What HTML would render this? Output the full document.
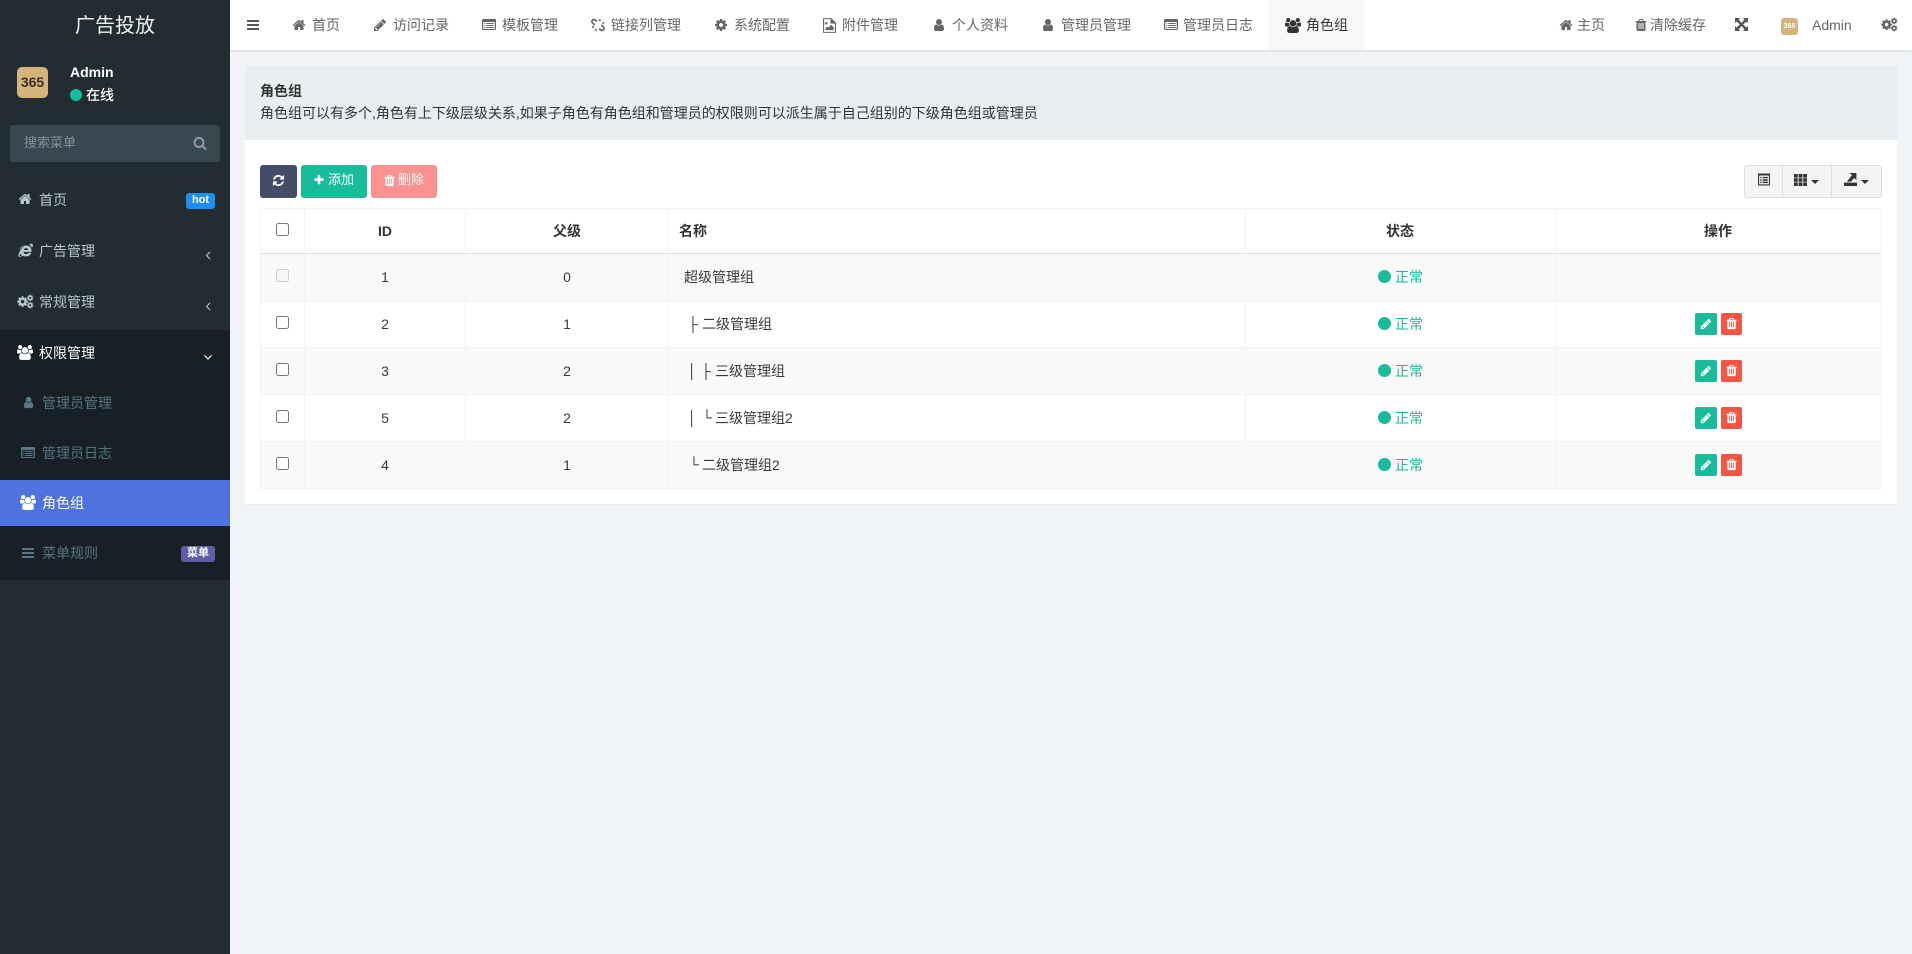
<!DOCTYPE html>
<html><head><meta charset="utf-8"><title>角色组</title>
<style>
html,body{margin:0;padding:0;width:1912px;height:954px;overflow:hidden;background:#f1f4f6;font-family:"Liberation Sans","Noto Sans CJK SC",sans-serif;font-size:14px;color:#3a3a3a}
.b{position:absolute}
.t{position:absolute;white-space:nowrap;line-height:20px;height:20px}
.c{transform:translateX(-50%)}
svg.i{position:absolute;fill:currentColor;overflow:visible}
.k{position:absolute;margin:0;width:13px;height:13px;left:276px}
.w{font-weight:bold}
</style></head><body>
<svg width="0" height="0" style="position:absolute">
<symbol id="home" viewBox="0 0 1792 1792"><path d="M1472 992v480q0 26-19 45t-45 19h-384v-384h-256v384h-384q-26 0-45-19t-19-45v-480q0-1 .5-3t.5-3l575-474 575 474q1 2 1 6zm223-69l-62 74q-8 9-21 11h-3q-13 0-21-7l-692-577-692 577q-12 8-24 7-13-2-21-11l-62-74q-8-10-7-23.5t11-21.5l719-599q32-26 76-26t76 26l244 204v-195q0-14 9-23t23-9h192q14 0 23 9t9 23v408l219 182q10 8 11 21.5t-7 23.5z"/></symbol>
<symbol id="bars" viewBox="0 0 1792 1792"><path d="M1664 1344v128q0 26-19 45t-45 19h-1408q-26 0-45-19t-19-45v-128q0-26 19-45t45-19h1408q26 0 45 19t19 45zm0-512v128q0 26-19 45t-45 19h-1408q-26 0-45-19t-19-45v-128q0-26 19-45t45-19h1408q26 0 45 19t19 45zm0-512v128q0 26-19 45t-45 19h-1408q-26 0-45-19t-19-45v-128q0-26 19-45t45-19h1408q26 0 45 19t19 45z"/></symbol>
<symbol id="pencil" viewBox="0 0 1792 1792"><path d="M491 1536l91-91-235-235-91 91v107h128v128h107zm523-928q0-22-22-22-10 0-17 7l-542 542q-7 7-7 17 0 22 22 22 10 0 17-7l542-542q7-7 7-17zm-54-192l416 416-832 832h-416v-416zm683 96q0 53-37 90l-166 166-416-416 166-165q36-38 90-38 53 0 91 38l235 234q37 39 37 91z"/></symbol>
<symbol id="user" viewBox="0 0 1792 1792"><path d="M1536 1399q0 109-62.5 187t-150.5 78h-854q-88 0-150.5-78t-62.5-187q0-85 8.5-160.5t31.5-152 58.5-131 94-89 134.5-34.5q131 128 313 128t313-128q76 0 134.5 34.5t94 89 58.5 131 31.5 152 8.5 160.5zm-256-887q0 159-112.5 271.5t-271.5 112.5-271.5-112.5-112.5-271.5 112.5-271.5 271.5-112.5 271.5 112.5 112.5 271.5z"/></symbol>
<symbol id="users" viewBox="0 0 1920 1792"><path d="M593 896q-162 5-265 128h-134q-82 0-138-40.5t-56-118.5q0-353 124-353 6 0 43.5 21t97.5 42.5 119 21.5q67 0 133-23-5 37-5 66 0 139 81 256zm1071 637q0 120-73 189.5t-194 69.5h-874q-121 0-194-69.5t-73-189.5q0-53 3.5-103.5t14-109 26.5-108.5 43-97.5 62-81 85.5-53.5 111.5-20q10 0 43 21.5t73 48 107 48 135 21.5 135-21.5 107-48 73-48 43-21.5q61 0 111.5 20t85.5 53.5 62 81 43 97.5 26.5 108.5 14 109 3.5 103.5zm-1024-1277q0 106-75 181t-181 75-181-75-75-181 75-181 181-75 181 75 75 181zm704 384q0 159-112.5 271.5t-271.5 112.5-271.5-112.5-112.5-271.5 112.5-271.5 271.5-112.5 271.5 112.5 112.5 271.5zm576 225q0 78-56 118.5t-138 40.5h-134q-103-123-265-128 81-117 81-256 0-29-5-66 66 23 133 23 59 0 119-21.5t97.5-42.5 43.5-21q124 0 124 353zm-128-609q0 106-75 181t-181 75-181-75-75-181 75-181 181-75 181 75 75 181z"/></symbol>
<symbol id="trash" viewBox="0 0 1792 1792"><path d="M704 1376v-704q0-14-9-23t-23-9h-64q-14 0-23 9t-9 23v704q0 14 9 23t23 9h64q14 0 23-9t9-23zm256 0v-704q0-14-9-23t-23-9h-64q-14 0-23 9t-9 23v704q0 14 9 23t23 9h64q14 0 23-9t9-23zm256 0v-704q0-14-9-23t-23-9h-64q-14 0-23 9t-9 23v704q0 14 9 23t23 9h64q14 0 23-9t9-23zm-544-992h448l-48-117q-7-9-17-11h-317q-10 2-17 11zm928 32v64q0 14-9 23t-23 9h-96v948q0 83-47 143.5t-113 60.5h-832q-66 0-113-58.5t-47-141.5v-952h-96q-14 0-23-9t-9-23v-64q0-14 9-23t23-9h309l70-167q15-37 54-63t79-26h320q40 0 79 26t54 63l70 167h309q14 0 23 9t9 23z"/></symbol>
<symbol id="search" viewBox="0 0 1792 1792"><path d="M1216 832q0-185-131.5-316.5t-316.5-131.5-316.5 131.5-131.5 316.5 131.5 316.5 316.5 131.5 316.5-131.5 131.5-316.5zm512 832q0 52-38 90t-90 38q-54 0-90-38l-343-342q-179 124-399 124-143 0-273.5-55.5t-225-150-150-225-55.5-273.5 55.5-273.5 150-225 225-150 273.5-55.5 273.5 55.5 225 150 150 225 55.5 273.5q0 220-124 399l343 343q37 37 37 90z"/></symbol>
<symbol id="plus" viewBox="0 0 1792 1792"><path d="M1600 736v192q0 40-28 68t-68 28h-416v416q0 40-28 68t-68 28h-192q-40 0-68-28t-28-68v-416h-416q-40 0-68-28t-28-68v-192q0-40 28-68t68-28h416v-416q0-40 28-68t68-28h192q40 0 68 28t28 68v416h416q40 0 68 28t28 68z"/></symbol>
<symbol id="refresh" viewBox="0 0 1792 1792"><path d="M1639 1056q0 5-1 7-64 268-268 434.5t-478 166.5q-146 0-282.5-55t-243.5-157l-129 129q-19 19-45 19t-45-19-19-45v-448q0-26 19-45t45-19h448q26 0 45 19t19 45-19 45l-137 137q71 66 161 102t187 36q134 0 250-65t186-179q11-17 53-117 8-23 30-23h192q13 0 22.5 9.5t9.5 22.5zm25-800v448q0 26-19 45t-45 19h-448q-26 0-45-19t-19-45 19-45l138-138q-148-137-349-137-134 0-250 65t-186 179q-11 17-53 117-8 23-30 23h-199q-13 0-22.5-9.5t-9.5-22.5v-7q65-268 270-434.5t480-166.5q146 0 284 55.5t245 156.5l130-129q19-19 45-19t45 19 19 45z"/></symbol>
<symbol id="cog" viewBox="0 0 1792 1792"><path d="M1152 896q0-106-75-181t-181-75-181 75-75 181 75 181 181 75 181-75 75-181zm512-109v222q0 12-8 23t-20 13l-185 28q-19 54-39 91 35 50 107 138 10 12 10 25t-9 23q-27 37-99 108t-94 71q-12 0-26-9l-138-108q-44 23-91 38-16 136-29 186-7 28-36 28h-222q-14 0-24.5-8.5t-11.5-21.5l-28-184q-49-16-90-37l-141 107q-10 9-25 9-14 0-25-11-126-114-165-168-7-10-7-23 0-12 8-23 15-21 51-66.5t54-70.5q-27-50-41-99l-183-27q-13-2-21-12.5t-8-23.5v-222q0-12 8-23t19-13l186-28q14-46 39-92-40-57-107-138-10-12-10-24 0-10 9-23 26-36 98.5-107.5t94.5-71.5q13 0 26 10l138 107q44-23 91-38 16-136 29-186 7-28 36-28h222q14 0 24.5 8.5t11.5 21.5l28 184q49 16 90 37l142-107q9-9 24-9 13 0 25 10 129 119 165 170 7 8 7 22 0 12-8 23-15 21-51 66.5t-54 70.5q26 50 41 98l183 28q13 2 21 12.5t8 23.5z"/></symbol>
<symbol id="cogs" viewBox="0 0 1792 1792"><use href="#cog" x="-60" y="260" width="1300" height="1300"/><use href="#cog" x="1000" y="130" width="780" height="780"/><use href="#cog" x="1000" y="900" width="780" height="780"/></symbol>
<symbol id="list" viewBox="0 0 1792 1792"><path fill-rule="evenodd" d="M160 128h1472q66 0 113 47t47 113v1088q0 66-47 113t-113 47H160q-66 0-113-47t-47-113V288q0-66 47-113t113-47zM160 512v864q0 32 32 32h1408q32 0 32-32V512zM288 640h128v128H288zm256 0h960v128H544zM288 896h128v128H288zm256 0h960v128H544zM288 1152h128v128H288zm256 0h960v128H544z"/></symbol>
<symbol id="left" viewBox="0 0 1792 1792"><path d="M1203 544q0 13-10 23l-393 393 393 393q10 10 10 23t-10 23l-50 50q-10 10-23 10t-23-10l-466-466q-10-10-10-23t10-23l466-466q10-10 23-10t23 10l50 50q10 10 10 23z"/></symbol>
<symbol id="down" viewBox="0 0 1792 1792"><path d="M1395 736q0 13-10 23l-466 466q-10 10-23 10t-23-10l-466-466q-10-10-10-23t10-23l50-50q10-10 23-10t23 10l393 393 393-393q10-10 23-10t23 10l50 50q10 10 10 23z"/></symbol>
<symbol id="ie" viewBox="0 0 16 16"><path fill-rule="evenodd" d="M8.6 2.6C12.4 2.6 14.8 5 14.4 9.4H6C6 12 9.6 12.8 11.2 10.4H14.2C12.8 14.6 7.8 15 5 13.4C3.6 14.6 1.6 15.2 0.7 14.2C0 13.2 0.6 11.2 1.6 9.4C2.6 7.2 4.4 5 6.8 3.6C4.4 4.2 2.4 6 1.4 7.4C2 4.6 5 2.6 8.6 2.6ZM6.2 7.4H10.8C10.8 4.8 6.4 4.8 6.2 7.4ZM2.2 11C1.6 12.4 1.6 13.4 2.2 13.8C2.8 14 3.6 13.6 4.2 13C3.2 12.6 2.6 11.8 2.2 11ZM12 1.4C14 .4 15.6.8 15.9 2C16 3 15.6 4.2 15 5.2C14.2 3.6 13.2 2.4 12 1.4Z"/></symbol>
<symbol id="unlink" viewBox="0 0 16 16"><g fill="none" stroke="currentColor" stroke-width="2" stroke-linecap="round"><path d="M6 3.4L4.8 2.4C3.8 1.5 2.4 1.6 1.6 2.5C.8 3.4.9 4.7 1.7 5.5L3.6 7.4"/><path d="M10 12.6L11.2 13.6C12.2 14.5 13.6 14.4 14.4 13.5C15.2 12.6 15.1 11.3 14.3 10.5L12.4 8.6"/></g><g fill="none" stroke="currentColor" stroke-width="1"><path d="M9.5 1V3.5M11 1.6L10.4 3.6M13 5H15.5M12.6 6.4L14.8 6.8M1 9.5H3.4M1.2 11L3.4 10.6M6.4 12.6V15M5 12.2L4.4 14.4"/></g></symbol>
<symbol id="file" viewBox="0 0 14 16"><path fill-rule="evenodd" d="M1 0H9L14 5V15C14 15.6 13.6 16 13 16H1C.4 16 0 15.6 0 15V1C0 .4.4 0 1 0ZM1.2 1.2V14.8H12.8V6H8V1.2ZM3.4 4.2A1.4 1.4 0 1 1 3.4 7A1.4 1.4 0 1 1 3.4 4.2ZM2.6 13V11L4.4 9L5.6 10.4L8.8 7.2L11.4 9.8V13Z"/></symbol>
<symbol id="expand" viewBox="0 0 14 14"><path d="M0 0H5.5L3.8 1.7L5.8 3.7L3.7 5.8L1.7 3.8L0 5.5ZM14 0V5.5L12.3 3.8L10.3 5.8L8.2 3.7L10.2 1.7L8.5 0ZM0 14V8.5L1.7 10.2L3.7 8.2L5.8 10.3L3.8 12.3L5.5 14ZM14 14H8.5L10.2 12.3L8.2 10.3L10.3 8.2L12.3 10.2L14 8.5Z"/><path d="M3.5 5.2L5.2 3.5L10.5 8.8L8.8 10.5ZM8.8 3.5L10.5 5.2L5.2 10.5L3.5 8.8Z"/></symbol>
<symbol id="grid" viewBox="0 0 13 12"><path d="M0 0h3.8v3.6H0zM4.6 0h3.8v3.6H4.6zM9.2 0H13v3.6H9.2zM0 4.2h3.8v3.6H0zM4.6 4.2h3.8v3.6H4.6zM9.2 4.2H13v3.6H9.2zM0 8.4h3.8V12H0zM4.6 8.4h3.8V12H4.6zM9.2 8.4H13V12H9.2z"/></symbol>
<symbol id="export" viewBox="0 0 13 13"><path d="M0 9.6H13V13H0z"/><path d="M5.4 0H12.4V7L10.2 5L7 8.6H2.8L8 2.2Z"/></symbol>
<symbol id="tlist" viewBox="0 0 13 13"><path fill-rule="evenodd" d="M0 0H13V13H0ZM1.2 2.2V11.8H11.8V2.2ZM2.4 3.6H3.8V5.2H2.4ZM5 3.6H10.6V5.2H5ZM2.4 6.2H3.8V7.8H2.4ZM5 6.2H10.6V7.8H5ZM2.4 8.8H3.8V10.4H2.4ZM5 8.8H10.6V10.4H5Z"/></symbol>
</svg>

<!-- Sidebar -->
<div class="b" style="left:0;top:0;width:230px;height:954px;background:#222d32"></div>
<div class="t c" style="left:115px;top:15px;font-size:20px;color:#f4f4f4;line-height:22px;height:22px">广告投放</div>
<div class="b" style="left:17px;top:67px;width:31px;height:31px;border-radius:5px;background:#d4b47a;color:#33302a;font-weight:bold;font-size:14px;line-height:31px;text-align:center">365</div>
<div class="t w" style="left:70px;top:62px;color:#fff">Admin</div>
<div class="b" style="left:70px;top:89px;width:12px;height:12px;border-radius:50%;background:#18bc9c"></div>
<div class="t" style="left:86px;top:85px;color:#fff;font-weight:500">在线</div>
<div class="b" style="left:10px;top:125px;width:210px;height:37px;border-radius:3px;background:#374850"></div>
<div class="t" style="left:24px;top:133px;font-size:13px;color:#8a9296">搜索菜单</div>
<svg class="i" style="left:193px;top:136px;width:14px;height:14px;color:#999"><use href="#search"/></svg>

<svg class="i" style="left:18px;top:192px;width:14px;height:14px;color:#b8c7ce"><use href="#home"/></svg>
<div class="t" style="left:39px;top:190px;color:#b8c7ce">首页</div>
<div class="b" style="left:186px;top:193px;width:29px;height:16px;border-radius:3px;background:#1e8fef;color:#fff;font-size:11px;font-weight:bold;line-height:15px;text-align:center">hot</div>

<svg class="i" style="left:18px;top:243px;width:15px;height:15px;color:#b8c7ce"><use href="#ie"/></svg>
<div class="t" style="left:39px;top:241px;color:#b8c7ce">广告管理</div>
<svg class="i" style="left:201px;top:248px;width:14px;height:14px;color:#b8c7ce"><use href="#left"/></svg>

<svg class="i" style="left:17px;top:293px;width:17px;height:17px;color:#b8c7ce"><use href="#cogs"/></svg>
<div class="t" style="left:39px;top:292px;color:#b8c7ce">常规管理</div>
<svg class="i" style="left:201px;top:299px;width:14px;height:14px;color:#b8c7ce"><use href="#left"/></svg>

<div class="b" style="left:0;top:330px;width:230px;height:250px;background:#182025"></div>
<svg class="i" style="left:17px;top:345px;width:16px;height:15px;color:#fff"><use href="#users"/></svg>
<div class="t" style="left:39px;top:343px;color:#fff">权限管理</div>
<svg class="i" style="left:201px;top:350px;width:14px;height:14px;color:#fff"><use href="#down"/></svg>

<svg class="i" style="left:22px;top:396px;width:13px;height:13px;color:#587888"><use href="#user"/></svg>
<div class="t" style="left:42px;top:393px;color:#547484">管理员管理</div>
<svg class="i" style="left:21px;top:446px;width:14px;height:14px;color:#587888"><use href="#list"/></svg>
<div class="t" style="left:42px;top:443px;color:#547484">管理员日志</div>
<div class="b" style="left:0;top:480px;width:230px;height:46px;background:#4e73df"></div>
<svg class="i" style="left:20px;top:495px;width:16px;height:15px;color:#fff"><use href="#users"/></svg>
<div class="t" style="left:42px;top:493px;color:#fff">角色组</div>
<svg class="i" style="left:21px;top:546px;width:14px;height:14px;color:#587888"><use href="#bars"/></svg>
<div class="t" style="left:42px;top:543px;color:#547484">菜单规则</div>
<div class="b" style="left:181px;top:546px;width:34px;height:16px;border-radius:3px;background:#605ca8;color:#fff;font-size:11px;font-weight:bold;line-height:15px;text-align:center">菜单</div>

<!-- Top nav -->
<div class="b" style="left:230px;top:0;width:1682px;height:50px;background:#fff;box-shadow:0 1px 2px rgba(0,0,0,.12)"></div>
<div class="b" style="left:1269px;top:0;width:95px;height:50px;background:#f8f8f8"></div>
<svg class="i" style="left:246px;top:18px;width:14px;height:14px;color:#555"><use href="#bars"/></svg>

<svg class="i" style="left:292px;top:18px;width:14px;height:14px;color:#666"><use href="#home"/></svg><div class="t" style="left:312px;top:15px;color:#666">首页</div>
<svg class="i" style="left:373px;top:18px;width:14px;height:14px;color:#666"><use href="#pencil"/></svg><div class="t" style="left:393px;top:15px;color:#666">访问记录</div>
<svg class="i" style="left:482px;top:18px;width:14px;height:14px;color:#666"><use href="#list"/></svg><div class="t" style="left:502px;top:15px;color:#666">模板管理</div>
<svg class="i" style="left:591px;top:18px;width:14px;height:14px;color:#666"><use href="#unlink"/></svg><div class="t" style="left:611px;top:15px;color:#666">链接列管理</div>
<svg class="i" style="left:714px;top:18px;width:14px;height:14px;color:#666"><use href="#cog"/></svg><div class="t" style="left:734px;top:15px;color:#666">系统配置</div>
<svg class="i" style="left:823px;top:18px;width:13px;height:15px;color:#666"><use href="#file"/></svg><div class="t" style="left:842px;top:15px;color:#666">附件管理</div>
<svg class="i" style="left:932px;top:18px;width:14px;height:14px;color:#666"><use href="#user"/></svg><div class="t" style="left:952px;top:15px;color:#666">个人资料</div>
<svg class="i" style="left:1041px;top:18px;width:14px;height:14px;color:#666"><use href="#user"/></svg><div class="t" style="left:1061px;top:15px;color:#666">管理员管理</div>
<svg class="i" style="left:1164px;top:18px;width:14px;height:14px;color:#666"><use href="#list"/></svg><div class="t" style="left:1183px;top:15px;color:#666">管理员日志</div>
<svg class="i" style="left:1285px;top:18px;width:16px;height:15px;color:#333"><use href="#users"/></svg><div class="t" style="left:1306px;top:15px;color:#333">角色组</div>

<svg class="i" style="left:1559px;top:18px;width:14px;height:14px;color:#666"><use href="#home"/></svg><div class="t" style="left:1577px;top:15px;color:#666">主页</div>
<svg class="i" style="left:1634px;top:18px;width:14px;height:14px;color:#666"><use href="#trash"/></svg><div class="t" style="left:1650px;top:15px;color:#666">清除缓存</div>
<svg class="i" style="left:1735px;top:18px;width:13px;height:13px;color:#555"><use href="#expand"/></svg>
<div class="b" style="left:1781px;top:18px;width:17px;height:17px;border-radius:3px;background:#d4b47a;color:#fff;font-size:7px;font-weight:bold;line-height:17px;text-align:center">365</div>
<div class="t" style="left:1812px;top:15px;color:#666">Admin</div>
<svg class="i" style="left:1881px;top:16px;width:17px;height:17px;color:#666"><use href="#cogs"/></svg>

<!-- Panel -->
<div class="b" style="left:245px;top:65px;width:1652px;height:439px;background:#fff;border-radius:3px;box-shadow:0 1px 1px rgba(0,0,0,.05)"></div>
<div class="b" style="left:245px;top:65px;width:1652px;height:75px;background:#e8edf0;border-radius:3px 3px 0 0"></div>
<div class="t w" style="left:260px;top:81px;color:#333">角色组</div>
<div class="t" style="left:260px;top:103px;color:#333">角色组可以有多个,角色有上下级层级关系,如果子角色有角色组和管理员的权限则可以派生属于自己组别的下级角色组或管理员</div>

<!-- Toolbar -->
<div class="b" style="left:260px;top:165px;width:37px;height:33px;border-radius:3px;background:#444c69"></div>
<svg class="i" style="left:272px;top:174px;width:13px;height:13px;color:#fff"><use href="#refresh"/></svg>
<div class="b" style="left:301px;top:165px;width:66px;height:33px;border-radius:3px;background:#18bc9c"></div>
<svg class="i" style="left:313px;top:174px;width:12px;height:12px;color:#fff"><use href="#plus"/></svg>
<div class="t" style="left:328px;top:170px;font-size:13px;color:#fff">添加</div>
<div class="b" style="left:371px;top:165px;width:66px;height:33px;border-radius:3px;background:#fc918f"></div>
<svg class="i" style="left:383px;top:174px;width:13px;height:13px;color:#fff"><use href="#trash"/></svg>
<div class="t" style="left:398px;top:170px;font-size:13px;color:#fff">删除</div>

<div class="b" style="left:1744px;top:165px;width:136px;height:31px;border:1px solid #ddd;border-radius:3px;background:#f4f4f4"></div>
<div class="b" style="left:1782px;top:166px;width:1px;height:31px;background:#ddd"></div>
<div class="b" style="left:1831px;top:166px;width:1px;height:31px;background:#ddd"></div>
<svg class="i" style="left:1758px;top:173px;width:12px;height:13px;color:#333"><use href="#tlist"/></svg>
<svg class="i" style="left:1794px;top:174px;width:13px;height:12px;color:#333"><use href="#grid"/></svg>
<div class="b" style="left:1811px;top:180px;border-left:4px solid transparent;border-right:4px solid transparent;border-top:4px solid #333"></div>
<svg class="i" style="left:1844px;top:173px;width:13px;height:13px;color:#333"><use href="#export"/></svg>
<div class="b" style="left:1861px;top:180px;border-left:4px solid transparent;border-right:4px solid transparent;border-top:4px solid #333"></div>

<!-- Table -->
<div class="b" style="left:260px;top:208px;width:1622px;height:281px;background:#fff"></div>
<div class="b" style="left:260px;top:254px;width:1622px;height:47px;background:#f9f9f9"></div>
<div class="b" style="left:260px;top:348px;width:1622px;height:46px;background:#f9f9f9"></div>
<div class="b" style="left:260px;top:441px;width:1622px;height:48px;background:#f9f9f9"></div>
<div class="b" style="left:260px;top:208px;width:1622px;height:1px;background:#f4f4f4"></div>
<div class="b" style="left:260px;top:253px;width:1622px;height:1px;background:#e0e0e0"></div>
<div class="b" style="left:260px;top:301px;width:1622px;height:1px;background:#f4f4f4"></div>
<div class="b" style="left:260px;top:347px;width:1622px;height:1px;background:#f4f4f4"></div>
<div class="b" style="left:260px;top:394px;width:1622px;height:1px;background:#f4f4f4"></div>
<div class="b" style="left:260px;top:441px;width:1622px;height:1px;background:#f4f4f4"></div>
<div class="b" style="left:260px;top:488px;width:1622px;height:1px;background:#f4f4f4"></div>
<div class="b" style="left:260px;top:208px;width:1px;height:281px;background:#f4f4f4"></div>
<div class="b" style="left:304px;top:208px;width:1px;height:281px;background:#f4f4f4"></div>
<div class="b" style="left:465px;top:208px;width:1px;height:281px;background:#f4f4f4"></div>
<div class="b" style="left:668px;top:208px;width:1px;height:281px;background:#f4f4f4"></div>
<div class="b" style="left:1245px;top:208px;width:1px;height:281px;background:#f4f4f4"></div>
<div class="b" style="left:1555px;top:208px;width:1px;height:281px;background:#f4f4f4"></div>
<div class="b" style="left:1881px;top:208px;width:1px;height:281px;background:#f4f4f4"></div>

<input type="checkbox" class="k" style="top:223px">
<input type="checkbox" class="k" style="top:269px" disabled>
<input type="checkbox" class="k" style="top:316px">
<input type="checkbox" class="k" style="top:363px">
<input type="checkbox" class="k" style="top:410px">
<input type="checkbox" class="k" style="top:457px">

<div class="t w c" style="left:385px;top:221px;color:#333">ID</div>
<div class="t w c" style="left:567px;top:221px;color:#333">父级</div>
<div class="t w" style="left:679px;top:221px;color:#333">名称</div>
<div class="t w c" style="left:1400px;top:221px;color:#333">状态</div>
<div class="t w c" style="left:1718px;top:221px;color:#333">操作</div>

<div class="t c" style="left:385px;top:267px">1</div><div class="t c" style="left:567px;top:267px">0</div>
<div class="t c" style="left:385px;top:314px">2</div><div class="t c" style="left:567px;top:314px">1</div>
<div class="t c" style="left:385px;top:361px">3</div><div class="t c" style="left:567px;top:361px">2</div>
<div class="t c" style="left:385px;top:408px">5</div><div class="t c" style="left:567px;top:408px">2</div>
<div class="t c" style="left:385px;top:455px">4</div><div class="t c" style="left:567px;top:455px">1</div>

<div class="t" style="left:684px;top:267px">超级管理组</div>
<div class="t" style="left:688px;top:314px">├</div><div class="t" style="left:702px;top:314px">二级管理组</div>
<div class="t" style="left:688px;top:361px">│</div><div class="t" style="left:701px;top:361px">├</div><div class="t" style="left:715px;top:361px">三级管理组</div>
<div class="t" style="left:688px;top:408px">│</div><div class="t" style="left:702px;top:407px">└</div><div class="t" style="left:715px;top:408px">三级管理组2</div>
<div class="t" style="left:689px;top:454px">└</div><div class="t" style="left:702px;top:455px">二级管理组2</div>

<div class="b" style="left:1378px;top:270px;width:13px;height:13px;border-radius:50%;background:#18bc9c"></div><div class="t" style="left:1395px;top:267px;color:#18bc9c">正常</div>
<div class="b" style="left:1378px;top:317px;width:13px;height:13px;border-radius:50%;background:#18bc9c"></div><div class="t" style="left:1395px;top:314px;color:#18bc9c">正常</div>
<div class="b" style="left:1378px;top:364px;width:13px;height:13px;border-radius:50%;background:#18bc9c"></div><div class="t" style="left:1395px;top:361px;color:#18bc9c">正常</div>
<div class="b" style="left:1378px;top:411px;width:13px;height:13px;border-radius:50%;background:#18bc9c"></div><div class="t" style="left:1395px;top:408px;color:#18bc9c">正常</div>
<div class="b" style="left:1378px;top:458px;width:13px;height:13px;border-radius:50%;background:#18bc9c"></div><div class="t" style="left:1395px;top:455px;color:#18bc9c">正常</div>

<div class="b" style="left:1695px;top:313px;width:22px;height:22px;border-radius:2px;background:#18bc9c"></div><svg class="i" style="left:1700px;top:318px;width:12px;height:12px;color:#fff"><use href="#pencil"/></svg>
<div class="b" style="left:1721px;top:313px;width:21px;height:22px;border-radius:2px;background:#f75444"></div><svg class="i" style="left:1725px;top:317px;width:13px;height:13px;color:#fff"><use href="#trash"/></svg>
<div class="b" style="left:1695px;top:360px;width:22px;height:22px;border-radius:2px;background:#18bc9c"></div><svg class="i" style="left:1700px;top:365px;width:12px;height:12px;color:#fff"><use href="#pencil"/></svg>
<div class="b" style="left:1721px;top:360px;width:21px;height:22px;border-radius:2px;background:#f75444"></div><svg class="i" style="left:1725px;top:364px;width:13px;height:13px;color:#fff"><use href="#trash"/></svg>
<div class="b" style="left:1695px;top:407px;width:22px;height:22px;border-radius:2px;background:#18bc9c"></div><svg class="i" style="left:1700px;top:412px;width:12px;height:12px;color:#fff"><use href="#pencil"/></svg>
<div class="b" style="left:1721px;top:407px;width:21px;height:22px;border-radius:2px;background:#f75444"></div><svg class="i" style="left:1725px;top:411px;width:13px;height:13px;color:#fff"><use href="#trash"/></svg>
<div class="b" style="left:1695px;top:454px;width:22px;height:22px;border-radius:2px;background:#18bc9c"></div><svg class="i" style="left:1700px;top:459px;width:12px;height:12px;color:#fff"><use href="#pencil"/></svg>
<div class="b" style="left:1721px;top:454px;width:21px;height:22px;border-radius:2px;background:#f75444"></div><svg class="i" style="left:1725px;top:458px;width:13px;height:13px;color:#fff"><use href="#trash"/></svg>
</body></html>
